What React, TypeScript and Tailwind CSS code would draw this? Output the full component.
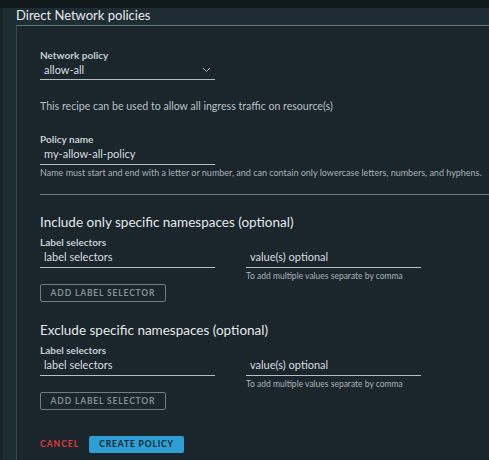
import React from 'react';

const Chevron = () => (
  <svg width="9" height="6" viewBox="0 0 9 6" className="mr-[4px]">
    <path d="M1 1l3.5 3.5L8 1" fill="none" stroke="#aeb8bd" strokeWidth="1" />
  </svg>
);

const TextField = ({ value, className = '' }: { value: string; className?: string }) => (
  <div className={`w-[175px] h-[20px] border-b border-[#b4bec3] flex items-center pl-[4px] text-[11px] text-[#d9dee1] ${className}`}>
    {value}
  </div>
);

const Label = ({ children }: { children: React.ReactNode }) => (
  <div className="h-[12px] leading-[12px] text-[10px] font-bold text-[#c4cdd2]">{children}</div>
);

// блок с селекторами меток
const NamespaceBlock = ({ title }: { title: string }) => (
  <div>
    <div className="h-[16px] leading-[16px] text-[13.5px] text-[#e4e8ea]">{title}</div>
    <div className="mt-[6px]">
      <Label>Label selectors</Label>
    </div>
    <div className="flex gap-[31px]">
      <TextField value="label selectors" />
      <div>
        <TextField value="value(s) optional" />
        <div className="mt-[2px] h-[12px] leading-[12px] text-[8.5px] text-[#a9b3b8]">
          To add multiple values separate by comma
        </div>
      </div>
    </div>
    <button className="block mt-[2px] w-[126px] h-[18px] border border-[#6f7c82] rounded-[2px] text-[8.5px] font-bold tracking-[0.1em] text-[#858f94]">
      ADD LABEL SELECTOR
    </button>
  </div>
);

const App = () => {
  return (
    <div className="w-[489px] h-[460px] overflow-hidden bg-[#1e2c33] font-['Lato',sans-serif]">
      <div className="h-[8px] bg-[#11191d]" />
      <div className="pl-[16px] border-l-[3px] border-[#172329]">
        <div className="h-[17px] leading-[15px] text-[13px] text-[#e6eaec] -ml-[3px]">Direct Network policies</div>
        <div className="-ml-[3px] h-[440px] bg-[#1a252c] border-l border-t border-l-[#3a4850] border-t-[#66767d] pl-[23px] pt-[23px]">
          <Label>Network policy</Label>
          <div className="w-[175px] h-[19px] border-b border-[#b4bec3] flex items-center justify-between pl-[4px] text-[11px] text-[#d9dee1]">
            allow-all
            <Chevron />
          </div>
          <div className="mt-[20px] h-[12px] leading-[12px] text-[10.6px] text-[#b8c1c5]">
            This recipe can be used to allow all ingress traffic on resource(s)
          </div>
          <div className="mt-[21px]">
            <Label>Policy name</Label>
          </div>
          <TextField value="my-allow-all-policy" />
          <div className="mt-[2px] h-[12px] leading-[12px] text-[9px] text-[#a9b3b8] whitespace-nowrap">
            Name must start and end with a letter or number, and can contain only lowercase letters, numbers, and hyphens.
          </div>
          <div className="mt-[15px] border-t border-[#6b777d]" />
          <div className="mt-[19px]">
            <NamespaceBlock title="Include only specific namespaces (optional)" />
          </div>
          <div className="mt-[20px]">
            <NamespaceBlock title="Exclude specific namespaces (optional)" />
          </div>
          <div className="mt-[26px] flex items-center gap-[10px]">
            <button className="block h-[17px] text-[8.5px] font-bold tracking-[0.12em] text-[#e0393e]">CANCEL</button>
            <button className="block w-[95px] h-[17px] rounded-[2px] bg-[#2e9fd4] text-[8.5px] font-bold tracking-[0.1em] text-[#16242c]">
              CREATE POLICY
            </button>
          </div>
        </div>
      </div>
    </div>
  );
};

export default App;
